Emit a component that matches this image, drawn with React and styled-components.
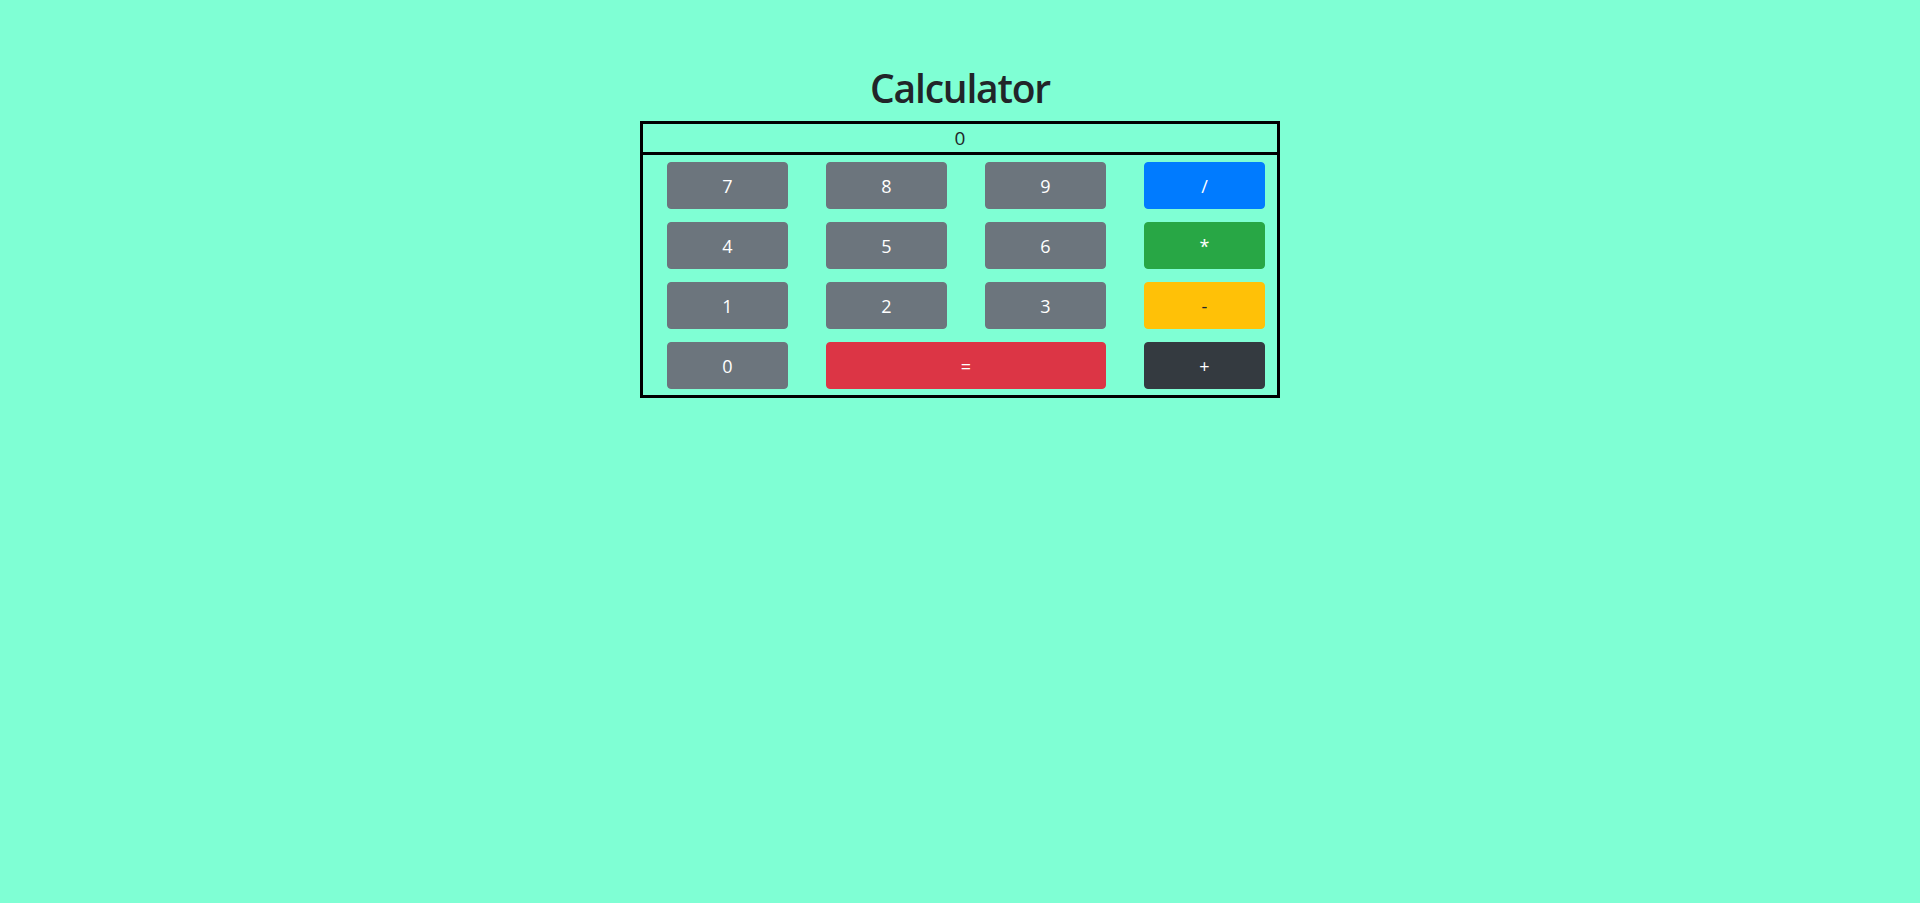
import React, { useState } from 'react';
import styled, { createGlobalStyle } from 'styled-components';

const GlobalStyle = createGlobalStyle`
  html, body {
    margin: 0;
    padding: 0;
    background: #7fffd4;
  }
  body {
    font-family: "Open Sans", "Noto Sans", "Liberation Sans", sans-serif;
    color: #212529;
  }
  * {
    box-sizing: border-box;
  }
`;

const Page = styled.div`
  min-height: 903px;
  background: #7fffd4;
  display: flex;
  flex-direction: column;
  align-items: center;
`;

const Title = styled.h1`
  font-size: 39px;
  font-weight: 600;
  letter-spacing: -1.2px;
  line-height: 48px;
  margin: 64px 0 9px;
  color: #212529;
`;

const Calc = styled.div`
  width: 640px;
  border: 3px solid #000000;
`;

const Display = styled.div`
  height: 31px;
  line-height: 28px;
  border-bottom: 3px solid #000000;
  text-align: center;
  font-size: 19px;
  color: #212529;
`;

const Keys = styled.div`
  display: grid;
  grid-template-columns: repeat(4, 121px);
  grid-auto-rows: 47px;
  column-gap: 38px;
  row-gap: 13px;
  padding: 7px 12px 6px 24px;
`;

const colours = {
  secondary: { bg: '#6c757d', fg: '#ffffff' },
  primary: { bg: '#007bff', fg: '#ffffff' },
  success: { bg: '#28a745', fg: '#ffffff' },
  warning: { bg: '#ffc107', fg: '#212529' },
  danger: { bg: '#dc3545', fg: '#ffffff' },
  dark: { bg: '#343a40', fg: '#ffffff' },
};

const Key = styled.button`
  grid-column: span ${(p) => p.$span || 1};
  border: 1px solid ${(p) => colours[p.$variant].bg};
  border-radius: 4px;
  background: ${(p) => colours[p.$variant].bg};
  color: ${(p) => colours[p.$variant].fg};
  font-family: inherit;
  font-size: 18px;
  font-weight: 400;
  padding: 0;
  cursor: pointer;
`;

const keys = [
  ['7', 'secondary'], ['8', 'secondary'], ['9', 'secondary'], ['/', 'primary'],
  ['4', 'secondary'], ['5', 'secondary'], ['6', 'secondary'], ['*', 'success'],
  ['1', 'secondary'], ['2', 'secondary'], ['3', 'secondary'], ['-', 'warning'],
  ['0', 'secondary'], ['=', 'danger', 2], ['+', 'dark'],
];

export default function App() {
  const [value, setValue] = useState('0');

  const press = (k) => {
    if (k === '=') {
      try {
        // eslint-disable-next-line no-new-func
        setValue(String(Function(`return (${value})`)()));
      } catch (e) {
        setValue('0');
      }
      return;
    }
    setValue((v) => (v === '0' ? k : v + k));
  };

  return (
    <Page>
      <GlobalStyle />
      <Title>Calculator</Title>
      <Calc>
        <Display>{value}</Display>
        <Keys>
          {keys.map(([k, variant, span]) => (
            <Key key={k} $variant={variant} $span={span} onClick={() => press(k)}>
              {k}
            </Key>
          ))}
        </Keys>
      </Calc>
    </Page>
  );
}
